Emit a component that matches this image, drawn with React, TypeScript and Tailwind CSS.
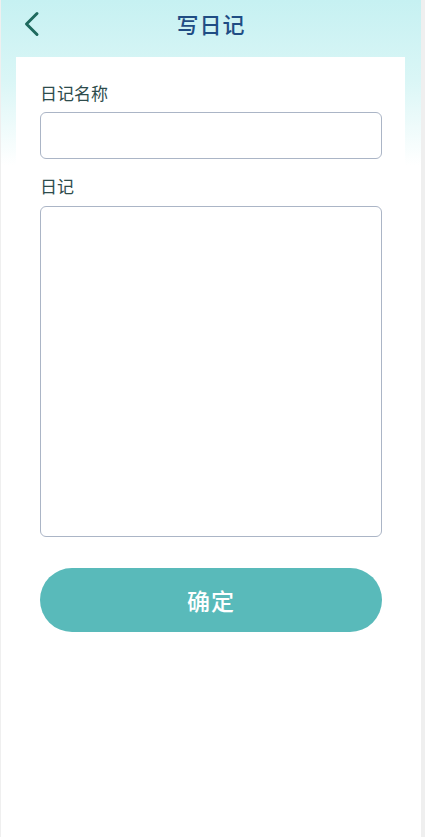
import { useState } from "react";

function BackIcon() {
  return (
    <svg width="18" height="26" viewBox="0 0 18 26" fill="none" className="block">
      <path
        d="M14 2.5L3.5 13L14 23.5"
        stroke="#1e6a5e"
        strokeWidth="3"
        strokeLinecap="round"
        strokeLinejoin="round"
      />
    </svg>
  );
}

export default function App() {
  const [title, setTitle] = useState("");
  const [body, setBody] = useState("");

  return (
    <div
      className="min-h-[837px] w-full bg-[#efefef] pl-[1px] pr-[4px] flex"
      style={{ fontFamily: '"Noto Sans CJK SC", "Noto Sans", sans-serif' }}
    >
      <div className="flex-1 min-h-[837px] bg-[linear-gradient(180deg,#c6f1f2_0px,#daf6f6_80px,#ffffff_165px)]">
        {/* Header */}
        <div className="relative h-[45px] flex items-center justify-center">
          <button className="absolute left-[22px] top-[11px]">
            <BackIcon />
          </button>
          <h1 className="text-[22px] leading-none font-medium text-[#1f4d84] tracking-[1px]">
            写日记
          </h1>
        </div>

        {/* Form card */}
        <div className="mt-[12px] ml-[15px] mr-[16px] bg-white pt-[24px] pl-[24px] pr-[23px] pb-[40px]">
          <label className="block text-[17px] leading-[24px] text-[#2e4c4c] mb-[7px]">
            日记名称
          </label>
          <input
            value={title}
            onChange={(e) => setTitle(e.target.value)}
            className="block w-full h-[47px] rounded-[6px] border-[1.5px] border-[#abb5c6] bg-white px-3 outline-none"
          />

          <label className="block mt-[15px] text-[17px] leading-[24px] text-[#2e4c4c] mb-[8px]">
            日记
          </label>
          <textarea
            value={body}
            onChange={(e) => setBody(e.target.value)}
            className="block w-full h-[331px] rounded-[6px] border-[1.5px] border-[#abb5c6] bg-white p-3 outline-none resize-none"
          />

          <button className="mt-[31px] w-full h-[64px] rounded-full bg-[#59baba] text-white text-[23px] font-medium tracking-[1px]">
            确定
          </button>
        </div>
      </div>
    </div>
  );
}
